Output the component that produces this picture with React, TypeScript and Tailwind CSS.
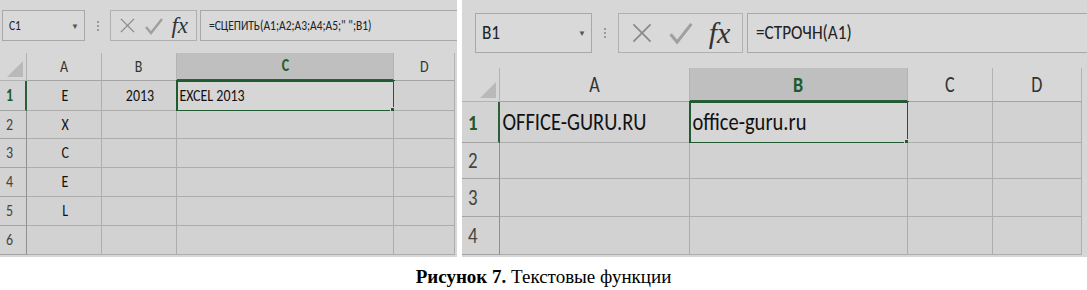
import React from "react";

const CALIBRI = "font-['Carlito','Liberation_Sans',Arial,sans-serif]";

interface Col {
  name: string;
  w: string;
  align?: string;
}

interface SheetProps {
  wrap: string;
  bar: string;
  nameBox: string;
  nameW: string;
  dotsW: string;
  fxW: string;
  fxGap: string;
  barText: string;
  icon: "sm" | "lg";
  formula: string;
  gridTop: string;
  rowHeadW: string;
  headH: string;
  rows: string[];
  cols: Col[];
  data: Record<string, string>;
  selCol: string;
  headText: string;
  cellText: string;
  rowHeadText: string;
  squeeze: string;
}

function Cross({ big }: { big: boolean }) {
  return (
    <svg className={big ? "w-[22px] h-[22px]" : "w-[17px] h-[17px]"} viewBox="0 0 18 18">
      <path d="M2 2 L16 16 M16 2 L2 16" stroke="#8a8a8a" strokeWidth="1.4" fill="none" />
    </svg>
  );
}

function Check({ big }: { big: boolean }) {
  return (
    <svg className={big ? "w-[26px] h-[24px]" : "w-[20px] h-[18px]"} viewBox="0 0 20 18">
      <path d="M2 10 L7 16 L18 2" stroke="#a0a0a0" strokeWidth="2.4" fill="none" />
    </svg>
  );
}

function Sheet(p: SheetProps) {
  const big = p.icon === "lg";
  return (
    <div className={`bg-[#d7d7d7] h-[257px] overflow-hidden ${p.wrap}`}>
      {/* строка формул */}
      <div className={`flex items-stretch ${p.bar}`}>
        <div
          className={`flex items-center justify-between border border-[#a8a8a8] bg-[#d9d9d9] pl-[6px] pr-[5px] text-[#222] ${CALIBRI} ${p.barText} ${p.nameW}`}
        >
          <span className={`inline-block origin-left ${p.squeeze}`}>{p.nameBox}</span>
          <span className="text-[8px] text-[#555]">▼</span>
        </div>
        <div className={`flex flex-col items-center justify-center gap-[2px] ${p.dotsW}`}>
          <span className="w-[2px] h-[2px] bg-[#9a9a9a]" />
          <span className="w-[2px] h-[2px] bg-[#9a9a9a]" />
          <span className="w-[2px] h-[2px] bg-[#9a9a9a]" />
        </div>
        <div
          className={`flex items-center justify-around border border-[#b0b0b0] bg-[#d9d9d9] px-[4px] ${p.fxW}`}
        >
          <Cross big={big} />
          <Check big={big} />
          <span
            className={`font-['Liberation_Serif',serif] italic text-[#333] leading-none ${
              big ? "text-[30px]" : "text-[23px]"
            }`}
          >
            fx
          </span>
        </div>
        <div
          className={`flex-1 flex items-center border border-[#a8a8a8] border-r-0 bg-[#d9d9d9] pl-[8px] text-[#222] whitespace-nowrap ${CALIBRI} ${p.barText} ${p.fxGap}`}
        >
          <span className={`inline-block origin-left ${p.squeeze}`}>{p.formula}</span>
        </div>
      </div>

      {/* сетка */}
      <div className={p.gridTop}>
        <div className={`flex ${p.headH}`}>
          <div className={`relative border-r border-b border-[#b3b3b3] bg-[#d7d7d7] ${p.rowHeadW}`}>
            <svg className="absolute right-[3px] bottom-[3px]" width="16" height="16" viewBox="0 0 16 16">
              <path d="M16 0 L16 16 L0 16 Z" fill="#b9b9b9" />
            </svg>
          </div>
          {p.cols.map((c) => (
            <div
              key={c.name}
              className={`flex items-center justify-center border-r border-[#b3b3b3] ${CALIBRI} ${p.headText} ${c.w} ${
                c.name === p.selCol
                  ? "bg-[#bfbfbf] border-b-2 border-b-[#2d5e3a] text-[#1d5a2e] font-bold"
                  : "bg-[#d7d7d7] border-b border-b-[#a3a3a3] text-[#333]"
              }`}
            >
              <span className={`inline-block ${p.squeeze}`}>{c.name}</span>
            </div>
          ))}
        </div>
        {p.rows.map((h, i) => {
          const r = i + 1;
          return (
            <div key={r} className={`flex ${h}`}>
              <div
                className={`flex items-center pl-[6px] border-b border-[#a3a3a3] bg-[#d3d3d3] ${CALIBRI} ${p.rowHeadText} ${p.rowHeadW} ${
                  r === 1
                    ? "border-r-2 border-r-[#2d5e3a] text-[#1d5a2e] font-bold"
                    : "border-r border-r-[#8f8f8f] text-[#444]"
                }`}
              >
                <span className={`inline-block origin-left ${p.squeeze}`}>{r}</span>
              </div>
              {p.cols.map((c) => {
                const key = `${c.name}${r}`;
                const sel = key === `${p.selCol}1`;
                return (
                  <div
                    key={key}
                    className={`relative flex items-center border-r border-b border-[#adadad] text-[#111] whitespace-nowrap ${CALIBRI} ${p.cellText} ${c.w} ${
                      c.align ?? "justify-center"
                    } ${sel ? "outline-2 outline-[#1f5a30] -outline-offset-1 bg-[#d6d6d6]" : "bg-[#d2d2d2]"}`}
                  >
                    <span
                      className={`inline-block pl-[3px] ${c.align ? "origin-left" : "origin-center"} ${p.squeeze}`}
                    >
                      {p.data[key] ?? ""}
                    </span>
                    {sel && (
                      <span className="absolute -right-[3px] -bottom-[3px] w-[6px] h-[6px] bg-[#1f5a30] border border-[#d6d6d6]" />
                    )}
                  </div>
                );
              })}
            </div>
          );
        })}
      </div>
    </div>
  );
}

export default function App() {
  return (
    <div className="w-[1087px] h-[290px] bg-white flex flex-col">
      <div className="flex gap-[5px]">
        <Sheet
          wrap="w-[457px]"
          bar="mt-[10px] h-[31px] pl-[2px]"
          nameBox="C1"
          nameW="w-[83px]"
          dotsW="w-[25px]"
          fxW="w-[87px]"
          fxGap="ml-[3px]"
          barText="text-[14px]"
          icon="sm"
          formula={"=СЦЕПИТЬ(A1;A2;A3;A4;A5;\" \";B1)"}
          gridTop="mt-[12px]"
          rowHeadW="w-[27px]"
          headH="h-[28px]"
          rows={["h-[30px]", "h-[28px]", "h-[29px]", "h-[29px]", "h-[29px]", "h-[29px]"]}
          cols={[
            { name: "A", w: "w-[75px]" },
            { name: "B", w: "w-[75px]" },
            { name: "C", w: "w-[217px]", align: "justify-start" },
            { name: "D", w: "w-[61px]" },
          ]}
          data={{ A1: "E", B1: "2013", C1: "EXCEL 2013", A2: "X", A3: "C", A4: "E", A5: "L" }}
          selCol="C"
          headText="text-[17px]"
          cellText="text-[17px]"
          rowHeadText="text-[17px]"
          squeeze="scale-x-[0.82]"
        />
        <Sheet
          wrap="w-[625px]"
          bar="mt-[13px] h-[40px] pl-[13px]"
          nameBox="B1"
          nameW="w-[117px]"
          dotsW="w-[26px]"
          fxW="w-[125px]"
          fxGap="ml-[4px]"
          barText="text-[21px]"
          icon="lg"
          formula="=СТРОЧН(A1)"
          gridTop="mt-[15px]"
          rowHeadW="w-[38px]"
          headH="h-[34px]"
          rows={["h-[41px]", "h-[36px]", "h-[38px]", "h-[38px]"]}
          cols={[
            { name: "A", w: "w-[190px]", align: "justify-start" },
            { name: "B", w: "w-[218px]", align: "justify-start" },
            { name: "C", w: "w-[85px]" },
            { name: "D", w: "w-[89px]" },
          ]}
          data={{ A1: "OFFICE-GURU.RU", B1: "office-guru.ru" }}
          selCol="B"
          headText="text-[22px]"
          cellText="text-[25px]"
          rowHeadText="text-[23px]"
          squeeze="scale-x-[0.82]"
        />
      </div>
      <div className="flex-1 flex items-center justify-center pt-[6px] font-['Liberation_Serif',serif] text-[19px] text-black">
        <span className="font-bold">Рисунок 7.</span>
        <span>&nbsp;Текстовые функции</span>
      </div>
    </div>
  );
}
